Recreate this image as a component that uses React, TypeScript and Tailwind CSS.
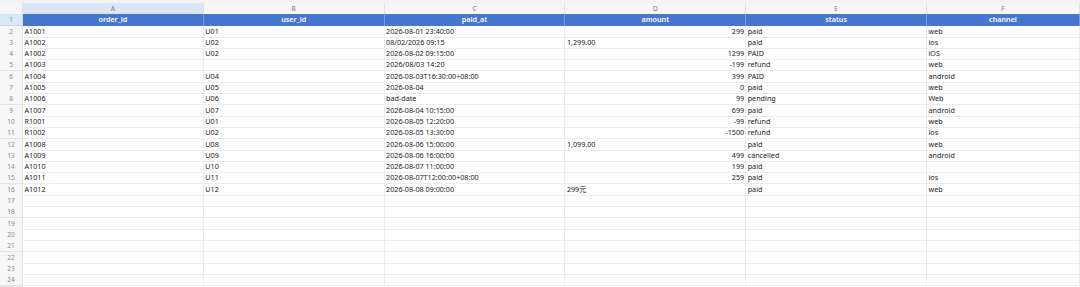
import React from "react";

type Cell = { v: string; r?: boolean };

const headers = ["order_id", "user_id", "paid_at", "amount", "status", "channel"];
const letters = ["A", "B", "C", "D", "E", "F"];

const R = (v: string): Cell => ({ v, r: true });
const L = (v: string): Cell => ({ v });

const data: Cell[][] = [
  [L("A1001"), L("U01"), L("2026-08-01 23:40:00"), R("299"), L("paid"), L("web")],
  [L("A1002"), L("U02"), L("08/02/2026 09:15"), L("1,299.00"), L("paid"), L("ios")],
  [L("A1002"), L("U02"), L("2026-08-02 09:15:00"), R("1299"), L("PAID"), L("iOS")],
  [L("A1003"), L(""), L("2026/08/03 14:20"), R("-199"), L("refund"), L("web")],
  [L("A1004"), L("U04"), L("2026-08-03T16:30:00+08:00"), R("399"), L("PAID"), L("android")],
  [L("A1005"), L("U05"), L("2026-08-04"), R("0"), L("paid"), L("web")],
  [L("A1006"), L("U06"), L("bad-date"), R("99"), L("pending"), L("Web")],
  [L("A1007"), L("U07"), L("2026-08-04 10:15:00"), R("699"), L("paid"), L("android")],
  [L("R1001"), L("U01"), L("2026-08-05 12:20:00"), R("-99"), L("refund"), L("web")],
  [L("R1002"), L("U02"), L("2026-08-05 13:30:00"), R("-1500"), L("refund"), L("ios")],
  [L("A1008"), L("U08"), L("2026-08-06 15:00:00"), L("1,099.00"), L("paid"), L("web")],
  [L("A1009"), L("U09"), L("2026-08-06 16:00:00"), R("499"), L("cancelled"), L("android")],
  [L("A1010"), L("U10"), L("2026-08-07 11:00:00"), R("199"), L("paid"), L("")],
  [L("A1011"), L("U11"), L("2026-08-07T12:00:00+08:00"), R("259"), L("paid"), L("ios")],
  [L("A1012"), L("U12"), L("2026-08-08 09:00:00"), L("299元"), L("paid"), L("web")],
];

const empty: Cell[] = [L(""), L(""), L(""), L(""), L(""), L("")];
const rows: Cell[][] = [...data];
while (rows.length < 23) rows.push(empty);

const gridCols = "grid grid-cols-[23px_repeat(5,180.8px)_1fr]";

export default function App() {
  return (
    <div
      className="w-[1080px] h-[287px] overflow-hidden bg-white text-[7.2px] text-[#222]"
      style={{ fontFamily: '"Noto Sans", "Noto Sans CJK SC", sans-serif' }}
    >
      <div className="h-[3px] bg-[#f3f3f3]" />
      {/* column letters */}
      <div className={`${gridCols} h-[11.3px] leading-[11px] bg-[#f7f7f7]`}>
        <div className="border-r border-b border-[#e0e0e0]" />
        {letters.map((l, i) => (
          <div
            key={l}
            className={`text-center text-[#777] text-[6.5px] border-r border-b border-[#e0e0e0] ${i === 0 ? "bg-[#d9e7f6]" : ""}`}
          >
            {l}
          </div>
        ))}
        <div className="border-b border-[#e0e0e0]" />
      </div>
      {/* header row */}
      <div className={`${gridCols} h-[11.3px] leading-[11px]`}>
        <div className="bg-[#d9e7f6] text-center text-[#8a9ab0] text-[6.5px] border-r border-b border-[#d0d8e4]">1</div>
        {headers.map((h) => (
          <div
            key={h}
            className="bg-[#4677cf] text-white font-semibold text-center border-r border-[#7a9ddc]"
          >
            {h}
          </div>
        ))}
        <div className="bg-[#4677cf]" />
      </div>
      {rows.map((row, ri) => (
        <div key={ri} className={`${gridCols} h-[11.3px] leading-[11px]`}>
          <div className="bg-[#f7f7f7] text-center text-[#888] text-[6.5px] border-r border-b border-[#e3e3e3]">
            {ri + 2}
          </div>
          {row.map((c, ci) => (
            <div
              key={ci}
              className={`border-r border-b border-[#ececec] whitespace-nowrap overflow-hidden ${
                c.r ? "text-right pr-[1px]" : "text-left pl-[1.5px]"
              }`}
            >
              {c.v}
            </div>
          ))}
          <div className="border-b border-[#ececec]" />
        </div>
      ))}
    </div>
  );
}
